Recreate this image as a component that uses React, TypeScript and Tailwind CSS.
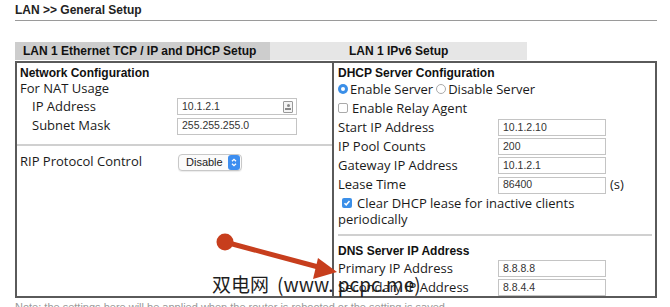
import React from 'react';

const label = "font-['Open_Sans','Liberation_Sans',Arial,sans-serif] text-[13px] text-[#1a1a1a] leading-[16px] pb-[2px]";
const bold = "font-['Liberation_Sans',Arial,sans-serif] font-bold text-[12px] text-[#111]";

function TextBox({ value, w, icon }: { value: string; w: string; icon?: boolean }) {
  return (
    <div className={`${w} h-[17px] flex-none border border-[#c4c4c4] bg-white flex items-center pl-[4px] pr-[3px] font-['Liberation_Sans',Arial,sans-serif] text-[10.5px] text-[#333]`}>
      <span className="flex-1">{value}</span>
      {icon && (
        <span className="w-[10px] h-[12px] border border-[#999] rounded-[1px] flex flex-col items-center justify-center gap-[1px] bg-[#f4f4f4]">
          <span className="w-[3px] h-[3px] rounded-full bg-[#888]" />
          <span className="w-[6px] h-[2px] bg-[#888]" />
        </span>
      )}
    </div>
  );
}

function Row({ name, value, h = 'h-[19px]', inputLeft, w, extra, icon, indent }: {
  name: string; value: string; h?: string; inputLeft: string; w: string; extra?: string; icon?: boolean; indent?: boolean;
}) {
  return (
    <div className={`${h} flex items-center`}>
      <div className={`${inputLeft} flex-none ${indent ? 'pl-[12px]' : ''} ${label}`}>{name}</div>
      <TextBox value={value} w={w} icon={icon} />
      {extra && <span className={`${label} ml-[4px]`}>{extra}</span>}
    </div>
  );
}

function Radio({ on }: { on?: boolean }) {
  return on ? (
    <span className="flex-none w-[10px] h-[10px] rounded-full bg-[#3b8fe8] flex items-center justify-center">
      <span className="w-[4px] h-[4px] rounded-full bg-white" />
    </span>
  ) : (
    <span className="flex-none block w-[10px] h-[10px] rounded-full border border-[#aaa] bg-white" />
  );
}

export default function App() {
  return (
    <div className="relative w-[670px] h-[307px] bg-white overflow-hidden">
      <div className="pl-[15px] pr-[13px]">
        {/* title */}
        <div className={`h-[20px] flex items-center ${bold} text-[#222]`}>
          LAN &gt;&gt; General Setup
        </div>
        <div className="h-[1px] bg-[#9a9a9a]" />

        {/* tabs */}
        <div className={`mt-[21px] flex h-[18px] ${bold}`}>
          <div className="w-[255px] bg-[#cdcdcd] flex items-center pl-[8px]">LAN 1 Ethernet TCP / IP and DHCP Setup</div>
          <div className="w-[257px] bg-[#e6e6e6] flex items-center pl-[79px]">LAN 1 IPv6 Setup</div>
        </div>

        {/* box */}
        <div className="mt-[1px] w-[642px] h-[237px] border-2 border-[#5a5a5a] flex">
          {/* left */}
          <div className="w-[317px] border-r-2 border-[#5a5a5a] pt-[2px]">
            <div className={`h-[16px] flex items-center pl-[3px] ${bold}`}>Network Configuration</div>
            <div className={`h-[16px] flex items-center pl-[3px] ${label}`}>For NAT Usage</div>
            <div className="pl-[3px]">
              <Row name="IP Address" value="10.1.2.1" h="h-[19px]" inputLeft="w-[157px]" w="w-[120px]" icon indent />
              <Row name="Subnet Mask" value="255.255.255.0" h="h-[20px]" inputLeft="w-[157px]" w="w-[120px]" indent />
            </div>
            <div className="h-[17px] flex items-center">
              <div className="w-full h-[2px] bg-[#d0d0d0]" />
            </div>
            <div className="h-[18px] flex items-center pl-[3px]">
              <div className={`w-[158px] flex-none ${label}`}>RIP Protocol Control</div>
              <div className="w-[64px] h-[17px] rounded-[4px] border border-[#c8c8c8] bg-[#fbfbfb] flex items-center shadow-[0_1px_1px_rgba(0,0,0,0.08)]">
                <span className="flex-1 pl-[7px] font-['Liberation_Sans',Arial,sans-serif] text-[11px] text-[#222]">Disable</span>
                <span className="w-[12px] h-[15px] mr-[1px] rounded-[3px] bg-[#3d8ef0] flex items-center justify-center">
                  <svg width="6" height="9" viewBox="0 0 6 9" fill="none" stroke="white" strokeWidth="1.3">
                    <path d="M1 3.2L3 1.3L5 3.2" />
                    <path d="M1 5.8L3 7.7L5 5.8" />
                  </svg>
                </span>
              </div>
            </div>
          </div>

          {/* right */}
          <div className="flex-1 pt-[2px] pl-[4px]">
            <div className={`h-[16px] flex items-center ${bold}`}>DHCP Server Configuration</div>
            <div className={`h-[18px] flex items-center ${label}`}>
              <Radio on />
              <span className="ml-[2px]">Enable Server</span>
              <span className="ml-[3px]"><Radio /></span>
              <span className="ml-[2px]">Disable Server</span>
            </div>
            <div className={`h-[19px] flex items-center ${label}`}>
              <span className="flex-none w-[10px] h-[10px] rounded-[2px] border border-[#aaa] bg-white" />
              <span className="ml-[4px]">Enable Relay Agent</span>
            </div>
            <Row name="Start IP Address" value="10.1.2.10" inputLeft="w-[160px]" w="w-[108px]" />
            <Row name="IP Pool Counts" value="200" inputLeft="w-[160px]" w="w-[108px]" />
            <Row name="Gateway IP Address" value="10.1.2.1" inputLeft="w-[160px]" w="w-[108px]" />
            <Row name="Lease Time" value="86400" h="h-[20px]" inputLeft="w-[160px]" w="w-[108px]" extra="(s)" />
            <div className={`h-[18px] flex items-center pl-[4px] ${label}`}>
              <span className="flex-none w-[10px] h-[10px] rounded-[2px] bg-[#3b8fe8] flex items-center justify-center">
                <svg width="8" height="8" viewBox="0 0 8 8" fill="none" stroke="white" strokeWidth="1.5">
                  <path d="M1.5 4.2L3.2 5.8L6.5 2" />
                </svg>
              </span>
              <span className="ml-[5px]">Clear DHCP lease for inactive clients</span>
            </div>
            <div className={`h-[14px] flex items-center ${label}`}>periodically</div>
            <div className="h-[16px] flex items-center pr-[3px]">
              <div className="w-full h-[2px] bg-[#d0d0d0]" />
            </div>
            <div className={`h-[16px] flex items-center ${bold}`}>DNS Server IP Address</div>
            <Row name="Primary IP Address" value="8.8.8.8" inputLeft="w-[160px]" w="w-[108px]" />
            <Row name="Secondary IP Address" value="8.8.4.4" inputLeft="w-[160px]" w="w-[108px]" />
          </div>
        </div>

        <div className="pt-[3px] font-['Liberation_Sans',Arial,sans-serif] text-[11px] text-[#999] leading-[12px]">
          Note: the settings here will be applied when the router is rebooted or the setting is saved.
        </div>
      </div>

      {/* annotation arrow */}
      <svg className="absolute left-0 top-0 pointer-events-none" width="670" height="307">
        <line x1="225" y1="242" x2="322" y2="268" stroke="#c73e1d" strokeWidth="5" />
        <polygon points="337,272 318,258 313,279" fill="#c73e1d" />
        <circle cx="225" cy="242" r="8.5" fill="#c73e1d" />
      </svg>

      {/* watermark */}
      <div className="absolute left-[212px] top-[272px] flex font-['Noto_Sans_CJK_SC','Liberation_Sans',sans-serif] text-[19px] leading-[24px] text-[#1e1e1e] whitespace-nowrap">
        <span>双电网</span>
        <span className="ml-[8px]">(www. pcpc.me)</span>
      </div>
    </div>
  );
}
